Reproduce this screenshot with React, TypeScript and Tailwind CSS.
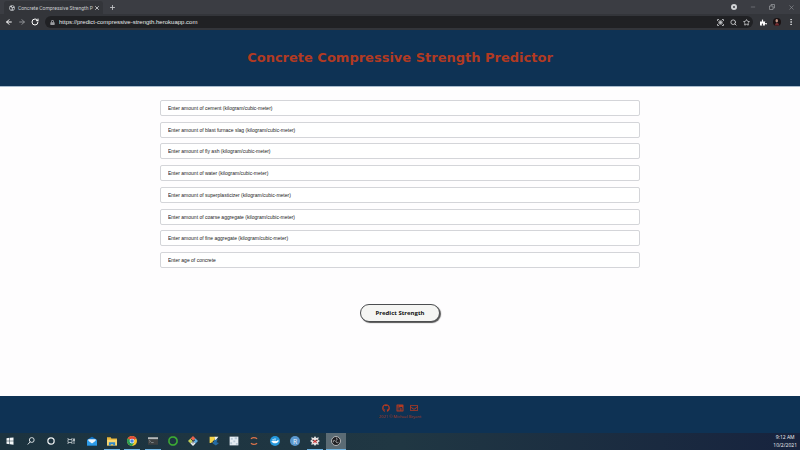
import React from "react";
import { FaGithub, FaLinkedin, FaRegEnvelope, FaPuzzlePiece, FaLock } from "react-icons/fa";
import { ArrowLeft, ArrowRight, Minus, MoreVertical, Plus, RotateCw, Search, Star, X } from "lucide-react";

const fields = [
  "Enter amount of cement (kilogram/cubic-meter)",
  "Enter amount of blast furnace slag (kilogram/cubic-meter)",
  "Enter amount of fly ash (kilogram/cubic-meter)",
  "Enter amount of water (kilogram/cubic-meter)",
  "Enter amount of superplasticizer (kilogram/cubic-meter)",
  "Enter amount of coarse aggregate (kilogram/cubic-meter)",
  "Enter amount of fine aggregate (kilogram/cubic-meter)",
  "Enter age of concrete",
];

function IconButton({ label, children }: { label: string; children: React.ReactNode }) {
  return (
    <button type="button" aria-label={label} className="flex size-3 items-center justify-center">
      {children}
    </button>
  );
}

function GlobeIcon() {
  return (
    <svg viewBox="0 0 16 16" className="size-[6px] shrink-0">
      <circle cx="8" cy="8" r="7.5" fill="#c3c6ca" />
      <path d="M2 5l4 1 2 3-2 4-3-2zM8 2l4 1-1 3-3-1zM10 8l4 0-1 4-3 0z" fill="#3a3c42" />
    </svg>
  );
}

function TabStrip() {
  return (
    <div className="flex h-[14px] items-end bg-[#3b3d43]">
      <div className="ml-1 flex h-[13px] w-[99px] items-center rounded-t-[3px] bg-[#33353a] pr-[3px] pl-[5px]">
        <GlobeIcon />
        <span className="ml-[3px] flex-1 font-['Roboto',sans-serif] text-[5px] leading-3 whitespace-nowrap text-[#c9cbcf]">
          Concrete Compressive Strength P
        </span>
        <button type="button" aria-label="Close tab">
          <X className="size-[6px] text-[#e3e4e6]" strokeWidth={3} />
        </button>
      </div>
      <div className="flex h-[14px] flex-1 items-center pl-[3px]">
        <IconButton label="New tab">
          <Plus className="size-[7px] text-[#c3c5c8]" strokeWidth={3} />
        </IconButton>
        <div className="ml-auto flex items-center">
          <span className="mr-[10px] flex size-[6px] items-center justify-center rounded-full bg-[#d0d2d5]">
            <span className="size-[2px] rounded-full bg-[#3b3d43]" />
          </span>
          <div className="flex gap-[7px] pr-[3px] text-[#96989c]">
            <IconButton label="Minimize">
              <Minus className="size-[6px]" />
            </IconButton>
            <IconButton label="Restore">
              <svg viewBox="0 0 12 12" className="size-[6px]" fill="none" stroke="currentColor" strokeWidth="1.5">
                <path d="M1 4h7v7H1zM4 4V1h7v7H8" />
              </svg>
            </IconButton>
            <IconButton label="Close">
              <X className="size-[7px]" />
            </IconButton>
          </div>
        </div>
      </div>
    </div>
  );
}

function Toolbar() {
  return (
    <div className="flex h-4 items-center bg-[#33353a] pr-[3px] pl-[3px]">
      <div className="flex gap-[1px]">
        <IconButton label="Back">
          <ArrowLeft className="size-[8px] text-white" strokeWidth={3} />
        </IconButton>
        <IconButton label="Forward">
          <ArrowRight className="size-[8px] text-[#909296]" strokeWidth={3} />
        </IconButton>
        <IconButton label="Reload">
          <RotateCw className="size-[8px] text-white" strokeWidth={3} />
        </IconButton>
      </div>
      <div className="ml-1 flex h-3 flex-1 items-center rounded-full bg-[#202124] pr-[1px] pl-[5px]">
        <FaLock className="size-[5px] shrink-0 text-[#9a9ca0]" />
        <input
          type="text"
          aria-label="Address"
          defaultValue="https://predict-compressive-strength.herokuapp.com"
          className="ml-1 h-3 flex-1 bg-transparent font-['Liberation_Sans',sans-serif] text-[6px] text-[#e6e7e9] outline-none"
        />
        <div className="flex gap-[1px] text-[#c9cbce]">
          <IconButton label="QR code">
            <svg viewBox="0 0 14 14" className="size-[7px]" fill="none" stroke="currentColor" strokeWidth="1.6">
              <path d="M1 4V1h3M10 1h3v3M13 10v3h-3M4 13H1v-3" />
              <path d="M4 4h6v6H4zM7 4v6M4 7h6" />
            </svg>
          </IconButton>
          <IconButton label="Zoom">
            <Search className="size-[7px]" strokeWidth={3} />
          </IconButton>
          <IconButton label="Bookmark">
            <Star className="size-[7px]" strokeWidth={3} />
          </IconButton>
        </div>
      </div>
      <div className="ml-1 flex gap-[2px]">
        <IconButton label="Extensions">
          <FaPuzzlePiece className="size-[7px] text-white" />
        </IconButton>
        <IconButton label="Profile">
          <svg viewBox="0 0 16 16" className="size-[8px]">
            <circle cx="8" cy="8" r="8" fill="#191113" />
            <ellipse cx="7.5" cy="5.5" rx="2.5" ry="3.3" fill="#c59886" />
            <path d="M4 15c0-4 2-5 4-5s4 1 4 5z" fill="#722d31" />
          </svg>
        </IconButton>
        <IconButton label="Menu">
          <MoreVertical className="size-[8px] text-[#d5d6d9]" strokeWidth={3} />
        </IconButton>
      </div>
    </div>
  );
}

const windowsIcon = <path d="M1 2.5l6-.8v6H1zM8 1.6L15 .8v6.9H8zM1 8.5h6v6l-6-.8zM8 8.5h7v6.9l-7-.9z" fill="#f4f7f8" />;
const searchIcon = (
  <g fill="none" stroke="#e8edef" strokeWidth="1.8">
    <circle cx="9.5" cy="6" r="4.8" />
    <path d="M6.5 9.5L1.5 15" />
  </g>
);
const cortanaIcon = <circle cx="8" cy="8" r="6.3" fill="none" stroke="#f0f3f4" strokeWidth="2.4" />;
const taskViewIcon = (
  <g fill="none" stroke="#d6dcdf" strokeWidth="1.5">
    <path d="M2 5h8v6H2zM2 4V2M10 4V2M2 12v2M10 12v2M14 2v12" />
    <path d="M13 5h2v2h-2z" fill="#d6dcdf" />
  </g>
);
const mailIcon = (
  <g>
    <path d="M0 6l8-5 8 5v9H0z" fill="#1276c8" />
    <path d="M2 5h12v4l-6 4-6-4z" fill="#f0f6fa" />
    <path d="M0 6l8 6 8-6v9H0z" fill="#2d9be8" />
  </g>
);
const folderIcon = (
  <g>
    <path d="M0 2h6l1 2h9v11H0z" fill="#e8b53b" />
    <path d="M0 6h16v9H0z" fill="#fad66e" />
    <path d="M3 10h10v5h-3v-2H6v2H3z" fill="#3189c9" />
  </g>
);
const chromeIcon = (
  <g>
    <circle cx="8" cy="8" r="8" fill="#f3c52f" />
    <path d="M8 8L1.1 4A8 8 0 0 1 14.9 4z" fill="#dd4b3b" />
    <path d="M8 8L1.1 4A8 8 0 0 0 8 16l3.5-6z" fill="#299d55" />
    <circle cx="8" cy="8" r="3.8" fill="#fff" />
    <circle cx="8" cy="8" r="2.9" fill="#4384e5" />
  </g>
);
const terminalIcon = (
  <g>
    <path d="M0 2h16v12H0z" fill="#3c4042" />
    <path d="M0 2h16v3H0z" fill="#b4babc" />
    <path d="M2 7l2 1.5L2 10M5 10.5h4" stroke="#a9b0b3" fill="none" />
  </g>
);
const anacondaIcon = (
  <g fill="none" stroke="#3eae35">
    <circle cx="8" cy="8" r="6.5" strokeWidth="2.4" />
    <circle cx="8" cy="8" r="7.5" strokeWidth="1" strokeDasharray="1 1" />
  </g>
);
const gitIcon = (
  <g>
    <path d="M8 0l4 4-4 4-4-4z" fill="#e8634d" />
    <path d="M4 4l4 4-4 4-4-4z" fill="#c3cf58" />
    <path d="M12 4l4 4-4 4-4-4z" fill="#62aee0" />
    <path d="M8 8l4 4-4 4-4-4z" fill="#e9edf0" />
    <path d="M5 5l3 3v4M8 8l3-1" stroke="#2b3337" strokeWidth="1.3" fill="none" />
  </g>
);
const pythonIcon = (
  <g>
    <path d="M1 1h9l-2 10H1z" fill="#f4d44b" />
    <path d="M9 1h6l-5 7z" fill="#e9eff1" />
    <path d="M7 7l7-2-2 5 4 1-5 4-5-3z" fill="#246ba4" />
    <path d="M3 12l5-4" stroke="#1b2930" strokeWidth="1.5" />
  </g>
);
const gridIcon = (
  <g>
    <path d="M1 1h14v14H1z" fill="#e6edf3" />
    <path d="M3 3h3v3H3zM9 2h4v3H9zM7 7h3v3H7zM2 10h3v3H2zM11 11h3v3h-3z" fill="#b9c9d7" />
  </g>
);
const jupyterIcon = (
  <g fill="none" stroke="#df744a" strokeWidth="1.9">
    <path d="M3 4.5Q8 1 13 4.5M3 11.5q5 3.5 10 0" />
  </g>
);
const dockerIcon = (
  <g>
    <circle cx="8" cy="8" r="8" fill="#2497dc" />
    <path d="M2 8h9l2-2 1 2c-2 4-9 6-12 0zM4 5h2v2H4zM7 5h2v2H7zM7 3h2v1H7z" fill="#f6fbff" />
  </g>
);
const rIcon = (
  <>
    <circle cx="8" cy="8" r="8" fill="#5b98cf" />
    <text x="8" y="12" textAnchor="middle" fontSize="11" fill="#f1f6fb">
      R
    </text>
  </>
);
const slackIcon = (
  <g>
    <path d="M8 0l2 3 4-1-1 4 3 2-3 2 1 4-4-1-2 3-2-3-4 1 1-4-3-2 3-2-1-4 4 1z" fill="#e7e5e5" />
    <path d="M4 5l4 2 4-2-2 4 2 3-4-2-4 2 2-3z" fill="#cb3b3b" />
    <circle cx="5" cy="7" r="1" fill="#26282b" />
    <circle cx="11" cy="7" r="1" fill="#26282b" />
  </g>
);
const obsIcon = (
  <g>
    <circle cx="8" cy="8" r="7.2" fill="#1f1f23" stroke="#d9dadb" strokeWidth="1.2" />
    <path d="M8 3c3 1 2 4 0 4M12 10c-3 2-4 0-4-2M4 10C3 7 5 6 7 8" fill="none" stroke="#c4c5c7" strokeWidth="1.2" />
  </g>
);

const apps: { name: string; icon: React.ReactNode; small?: boolean; open?: boolean; active?: boolean }[] = [
  { name: "Start", icon: windowsIcon, small: true },
  { name: "Search", icon: searchIcon, small: true },
  { name: "Cortana", icon: cortanaIcon, small: true },
  { name: "Task View", icon: taskViewIcon, small: true },
  { name: "Mail", icon: mailIcon },
  { name: "File Explorer", icon: folderIcon, open: true },
  { name: "Chrome", icon: chromeIcon, open: true },
  { name: "Terminal", icon: terminalIcon, open: true },
  { name: "Anaconda", icon: anacondaIcon },
  { name: "Git", icon: gitIcon },
  { name: "Python", icon: pythonIcon },
  { name: "Data", icon: gridIcon },
  { name: "Jupyter", icon: jupyterIcon },
  { name: "Docker", icon: dockerIcon },
  { name: "R", icon: rIcon },
  { name: "Chat", icon: slackIcon, open: true },
  { name: "Recorder", icon: obsIcon, open: true, active: true },
];

function Taskbar() {
  return (
    <div className="flex h-[17px] items-stretch bg-linear-to-r from-[#1c333f] via-[#203743] to-[#17233e]">
      <div className="grid w-[346px] grid-cols-17">
        {apps.map((app) => (
          <button
            key={app.name}
            type="button"
            aria-label={app.name}
            className={`flex flex-col items-center justify-between ${app.active ? "bg-[#5b6b74]" : ""}`}
          >
            <span className="flex flex-1 items-center justify-center">
              <svg viewBox="0 0 16 16" className={app.small ? "size-[8px]" : "size-[10px]"}>
                {app.icon}
              </svg>
            </span>
            <span className={`h-px ${app.active ? "w-full" : "w-4"} ${app.open ? "bg-[#6fb4e4]" : ""}`} />
          </button>
        ))}
      </div>
      <div className="ml-auto flex flex-col pr-[3px] text-center text-[5px] leading-[8px] text-[#f0f2f5]">
        <span>9:12 AM</span>
        <span>10/2/2021</span>
      </div>
    </div>
  );
}

export default function App() {
  return (
    <div className="flex min-h-screen flex-col bg-[#fefdfe] font-['Open_Sans',sans-serif]">
      <TabStrip />
      <Toolbar />
      <header className="flex h-[57px] items-center justify-center border-b border-[#a9bccd] bg-[#0e3254]">
        <h1 className="font-['DejaVu_Sans',sans-serif] text-[13px] leading-4 font-bold text-[#b23a22]">
          Concrete Compressive Strength Predictor
        </h1>
      </header>
      <main className="flex-1">
        <form className="flex flex-col items-center pt-[13px]" onSubmit={(e) => e.preventDefault()}>
          <div className="flex h-[168px] w-3/5 flex-col justify-between">
            {fields.map((label) => (
              <input
                key={label}
                type="text"
                aria-label={label}
                placeholder={label}
                className="h-4 rounded-[2px] border border-[#d4d5d9] bg-white px-[7px] font-['Liberation_Sans',sans-serif] text-[5px] text-[#222] placeholder:text-[#222]"
              />
            ))}
          </div>
          <button
            type="submit"
            className="mt-9 h-[18px] w-20 rounded-full border border-[#4c4e50] bg-[#f5f5f3] text-[6px] font-bold text-[#111] shadow-[1px_1px_1px_#555]"
          >
            Predict Strength
          </button>
        </form>
      </main>
      <footer className="flex h-[37px] flex-col items-center bg-[#0e3254] pt-2 text-[#b23a22]">
        <div className="flex gap-[6px]">
          <a href="#github" aria-label="GitHub">
            <FaGithub className="size-[8px]" />
          </a>
          <a href="#linkedin" aria-label="LinkedIn">
            <FaLinkedin className="size-[8px]" />
          </a>
          <a href="#email" aria-label="Email">
            <FaRegEnvelope className="size-[8px]" />
          </a>
        </div>
        <p className="mt-[2px] text-[4px] leading-[6px]">2021 © Michael Bryant</p>
      </footer>
      <Taskbar />
    </div>
  );
}
